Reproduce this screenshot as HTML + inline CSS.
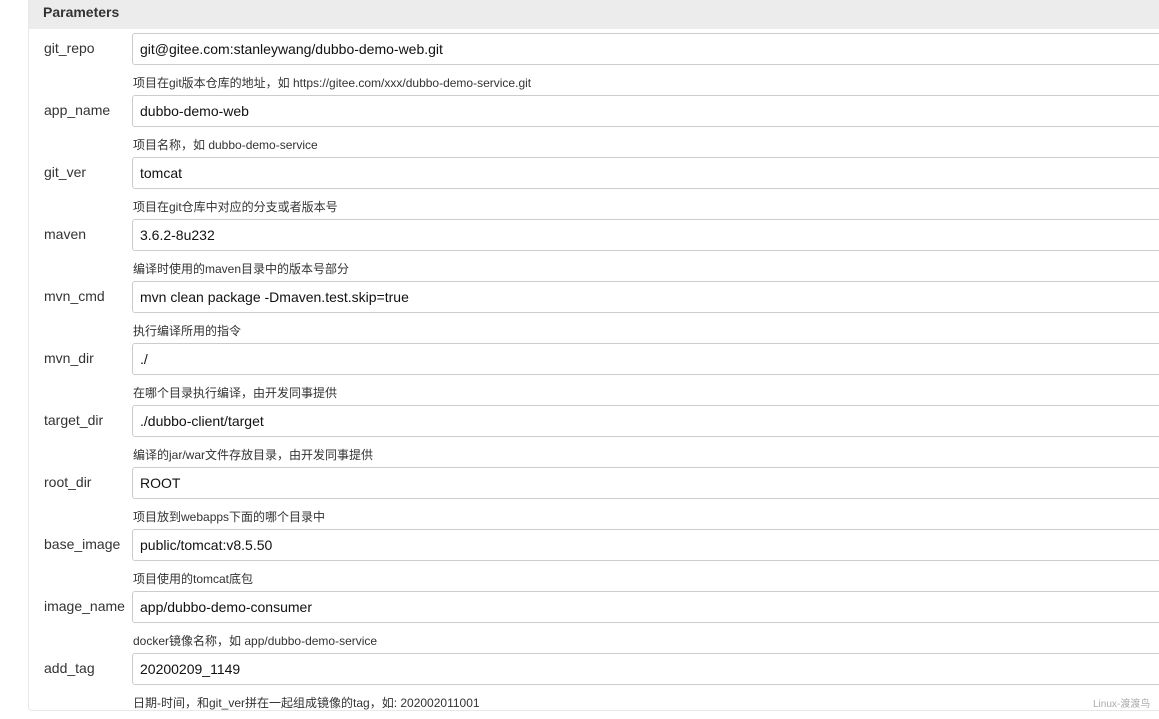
<!DOCTYPE html>
<html><head><meta charset="utf-8"><style>
body{margin:0;width:1159px;height:719px;background:#fff;overflow:hidden;position:relative;font-family:"Liberation Sans","Noto Sans CJK SC",sans-serif;}
.panel{position:absolute;left:28px;top:-5px;width:1140px;height:716px;border:1px solid #e8e8e8;border-radius:4px;box-sizing:border-box;}
.hdr{position:absolute;left:29px;top:0;width:1130px;height:29px;background:#ececec;}
.hdr span{position:absolute;left:14px;top:4px;font-size:14px;font-weight:bold;color:#333;}
.lbl{position:absolute;left:44px;font-size:14px;color:#333;}
.inp{position:absolute;left:132px;width:1040px;height:32px;border:1px solid #ccc;border-radius:3px;box-sizing:border-box;font-size:14px;color:#111;padding:7px 0 0 7px;}
.desc{position:absolute;left:133px;font-size:12px;color:#333;}
.wm{position:absolute;left:1093px;top:695px;font-size:10px;color:#aaa;}
</style></head><body>
<div class="panel"></div>
<div class="hdr"><span>Parameters</span></div>

<div class="lbl" style="top:40px">git_repo</div>
<div class="inp" style="top:33px">git@gitee.com:stanleywang/dubbo-demo-web.git</div>
<div class="desc" style="top:74px">项目在git版本仓库的地址，如 https://gitee.com/xxx/dubbo-demo-service.git</div>

<div class="lbl" style="top:102px">app_name</div>
<div class="inp" style="top:95px">dubbo-demo-web</div>
<div class="desc" style="top:136px">项目名称，如 dubbo-demo-service</div>

<div class="lbl" style="top:164px">git_ver</div>
<div class="inp" style="top:157px">tomcat</div>
<div class="desc" style="top:198px">项目在git仓库中对应的分支或者版本号</div>

<div class="lbl" style="top:226px">maven</div>
<div class="inp" style="top:219px">3.6.2-8u232</div>
<div class="desc" style="top:260px">编译时使用的maven目录中的版本号部分</div>

<div class="lbl" style="top:288px">mvn_cmd</div>
<div class="inp" style="top:281px">mvn clean package -Dmaven.test.skip=true</div>
<div class="desc" style="top:322px">执行编译所用的指令</div>

<div class="lbl" style="top:350px">mvn_dir</div>
<div class="inp" style="top:343px">./</div>
<div class="desc" style="top:384px">在哪个目录执行编译，由开发同事提供</div>

<div class="lbl" style="top:412px">target_dir</div>
<div class="inp" style="top:405px">./dubbo-client/target</div>
<div class="desc" style="top:446px">编译的jar/war文件存放目录，由开发同事提供</div>

<div class="lbl" style="top:474px">root_dir</div>
<div class="inp" style="top:467px">ROOT</div>
<div class="desc" style="top:508px">项目放到webapps下面的哪个目录中</div>

<div class="lbl" style="top:536px">base_image</div>
<div class="inp" style="top:529px">public/tomcat:v8.5.50</div>
<div class="desc" style="top:570px">项目使用的tomcat底包</div>

<div class="lbl" style="top:598px">image_name</div>
<div class="inp" style="top:591px">app/dubbo-demo-consumer</div>
<div class="desc" style="top:632px">docker镜像名称，如 app/dubbo-demo-service</div>

<div class="lbl" style="top:660px">add_tag</div>
<div class="inp" style="top:653px">20200209_1149</div>
<div class="desc" style="top:694px">日期-时间，和git_ver拼在一起组成镜像的tag，如: 202002011001</div>

<div class="wm">Linux-渡渡鸟</div>
</body></html>
